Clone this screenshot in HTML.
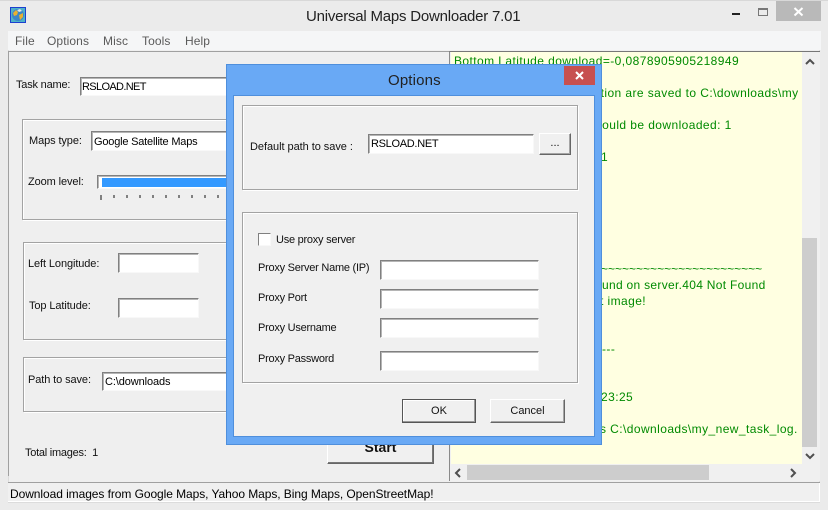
<!DOCTYPE html>
<html><head><meta charset="utf-8"><style>
html,body{margin:0;padding:0;width:828px;height:510px;overflow:hidden;background:#ebebeb}
body{position:relative;font-family:"Liberation Sans",sans-serif;font-size:11px;color:#111}
div,span.a{position:absolute;box-sizing:border-box}
.t{white-space:nowrap;line-height:14px;letter-spacing:-.1px}
.d{letter-spacing:-.25px}
.m{font-size:12px;color:#5a5a5a;letter-spacing:.1px}
.in{background:#fff;border:1px solid;border-color:#808080 #f8f8f8 #f8f8f8 #808080;box-shadow:inset 1px 1px 0 #b5b5b5}
.gr{border:1px solid #a3a3a3;box-shadow:1px 1px 0 #fff,inset 1px 1px 0 #fff}
.btn{background:#f0f0f0;border:1px solid;border-color:#fff #666 #666 #fff;box-shadow:inset -1px -1px 0 #a5a5a5,inset 1px 1px 0 #eee,0 0 0 1px #bbb;text-align:center;white-space:nowrap}
.lg{color:#008a00;font-size:12px;line-height:16px;white-space:nowrap;letter-spacing:.42px}
</style></head><body>
<div style="left:0;top:0;width:828px;height:1px;background:#d8d8d8"></div>
<svg style="position:absolute;left:10px;top:7px" width="16" height="16" viewBox="0 0 16 16"><rect x=".5" y=".5" width="15" height="15" fill="#4fb2c8" stroke="#1c3fd0"/><circle cx="8" cy="8" r="6" fill="#3a86c8"/><path d="M3 6l3-3 2 2-1 3-3 1zM9 8l4-2 0 4-3 3z" fill="#e8b030"/><path d="M7 3l3-1 2 2-3 1z" fill="#dfe8e8"/></svg>
<div class="t" style="left:306px;top:7px;font-size:15px;line-height:20px;color:#222;letter-spacing:-.22px">Universal Maps Downloader 7.01</div>
<div style="left:732px;top:13px;width:8px;height:2px;background:#222"></div>
<div style="left:758px;top:8px;width:10px;height:8px;border:1px solid #777;border-top-width:2px"></div>
<div style="left:776px;top:1px;width:45px;height:20px;background:#b9b9b9"></div>
<svg style="position:absolute;left:793px;top:6px" width="11" height="11" viewBox="0 0 11 11"><path d="M1.500 2l8 7.500M9.500 2l-8 7.500" stroke="#fff" stroke-width="2"/></svg>

<div style="left:8px;top:31px;width:812px;height:472px;background:#efefef;border:1px solid #dcdcdc"></div>
<div style="left:8px;top:31px;width:813px;height:19px;background:#f5f6f7"></div>
<div class="t m" style="left:15px;top:34px">File</div>
<div class="t m" style="left:47px;top:34px">Options</div>
<div class="t m" style="left:103px;top:34px">Misc</div>
<div class="t m" style="left:142px;top:34px">Tools</div>
<div class="t m" style="left:185px;top:34px">Help</div>
<div style="left:8px;top:51px;width:812px;height:1px;background:#a0a0a0"></div>
<div style="left:8px;top:51px;width:1px;height:425px;background:#a0a0a0"></div>

<div class="t" style="left:16px;top:78px;letter-spacing:-.2px">Task name:</div>
<div class="in" style="left:80px;top:77px;width:170px;height:19px"></div>
<div class="t" style="left:82px;top:80px;color:#000;letter-spacing:-.65px">RSLOAD.NET</div>

<div class="gr" style="left:22px;top:119px;width:220px;height:101px"></div>
<div class="t" style="left:29px;top:134px">Maps type:</div>
<div class="in" style="left:91px;top:131px;width:160px;height:20px"></div>
<div class="t" style="left:94px;top:135px;color:#000;letter-spacing:-.2px">Google Satellite Maps</div>
<div class="t" style="left:28px;top:175px">Zoom level:</div>
<div class="in" style="left:97px;top:175px;width:140px;height:14px"></div>
<div style="left:102px;top:178px;width:130px;height:9px;background:#3399ff"></div>
<svg style="position:absolute;left:98px;top:193px" width="130" height="8"><path d="M3 2v5M16 2v3M29 2v3M42 2v3M55 2v3M68 2v3M81 2v3M94 2v3M107 2v3M120 2v3" stroke="#111"/></svg>

<div class="gr" style="left:23px;top:242px;width:220px;height:98px"></div>
<div class="t" style="left:28px;top:257px">Left Longitude:</div>
<div class="in" style="left:118px;top:253px;width:81px;height:20px"></div>
<div class="t" style="left:29px;top:299px">Top Latitude:</div>
<div class="in" style="left:118px;top:298px;width:81px;height:20px"></div>

<div class="gr" style="left:23px;top:357px;width:220px;height:55px"></div>
<div class="t" style="left:28px;top:373px">Path to save:</div>
<div class="in" style="left:102px;top:372px;width:140px;height:19px"></div>
<div class="t" style="left:105px;top:375px;color:#000">C:\downloads</div>
<div class="t" style="left:25px;top:446px;letter-spacing:-.25px">Total images:&nbsp; 1</div>
<div class="btn" style="left:327px;top:432px;width:107px;height:32px;font-weight:bold;font-size:14px;line-height:29px;color:#111;box-shadow:inset -1px -1px 0 #777">Start</div>

<div style="left:449px;top:51px;width:371px;height:430px;background:#f0f0f0;border-left:1px solid #8a8a8a;border-top:1px solid #777"></div>
<div style="left:451px;top:52px;width:351px;height:412px;background:#ffffe1"></div>
<div style="left:451px;top:52px;width:347px;height:412px;overflow:hidden">
<div class="lg" style="left:3px;top:1px">Bottom Latitude download=-0,0878905905218949</div>
<div class="lg" style="left:106px;top:33px">Information are saved to C:\downloads\my_new_task</div>
<div class="lg" style="left:92px;top:65px">Images should be downloaded: 1</div>
<div class="lg" style="left:150px;top:97px">1</div>
<div class="lg" style="left:150px;top:209px;letter-spacing:0">~~~~~~~~~~~~~~~~~~~~~~~</div>
<div class="lg" style="left:151px;top:225px;letter-spacing:.3px">und on server.404 Not Found</div>
<div class="lg" style="left:149px;top:241px">t image!</div>
<div class="lg" style="left:151px;top:289px">---</div>
<div class="lg" style="left:150px;top:337px">23:25</div>
<div class="lg" style="left:149px;top:369px">s C:\downloads\my_new_task_log.</div>
</div>
<div style="left:802px;top:238px;width:15px;height:209px;background:#cdcdcd"></div>
<div style="left:467px;top:465px;width:242px;height:15px;background:#cdcdcd"></div>
<svg style="position:absolute;left:804px;top:57px" width="12" height="10"><path d="M2 7l4-4 4 4" fill="none" stroke="#505050" stroke-width="2"/></svg>
<svg style="position:absolute;left:804px;top:451px" width="12" height="10"><path d="M2 3l4 4 4-4" fill="none" stroke="#505050" stroke-width="2"/></svg>
<svg style="position:absolute;left:453px;top:467px" width="10" height="12"><path d="M7 2l-4 4 4 4" fill="none" stroke="#505050" stroke-width="2"/></svg>
<svg style="position:absolute;left:788px;top:467px" width="10" height="12"><path d="M3 2l4 4-4 4" fill="none" stroke="#505050" stroke-width="2"/></svg>

<div style="left:8px;top:482px;width:812px;height:1px;background:#a0a0a0"></div>
<div style="left:8px;top:483px;width:812px;height:19px;background:#f0f0f0;border-bottom:1px solid #fff;border-right:1px solid #fff"></div>
<div class="t" style="left:10px;top:487px;font-size:12px;color:#000;letter-spacing:-.07px">Download images from Google Maps, Yahoo Maps, Bing Maps, OpenStreetMap!</div>

<div style="left:226px;top:64px;width:376px;height:381px;background:#69a9f5;border:1px solid #4f8fdc"></div>
<div style="left:233px;top:95px;width:362px;height:342px;background:#f0f0f0;border:1px solid #4f8fdc"></div>
<div class="t" style="left:388px;top:71px;font-size:15px;line-height:20px;color:#222;letter-spacing:.15px">Options</div>
<div style="left:564px;top:66px;width:31px;height:19px;background:#c75050"></div>
<svg style="position:absolute;left:574px;top:70px" width="11" height="11" viewBox="0 0 11 11"><path d="M2 2l7 7M9 2l-7 7" stroke="#fff" stroke-width="2"/></svg>

<div class="gr" style="left:242px;top:105px;width:336px;height:85px"></div>
<div class="t" style="left:250px;top:140px;letter-spacing:-.05px">Default path to save :</div>
<div class="in" style="left:368px;top:134px;width:166px;height:20px"></div>
<div class="t" style="left:371px;top:137px;color:#000;letter-spacing:-.3px">RSLOAD.NET</div>
<div class="btn" style="left:539px;top:133px;width:32px;height:22px;line-height:18px;box-shadow:inset -1px -1px 0 #a5a5a5">...</div>

<div class="gr" style="left:242px;top:212px;width:336px;height:171px"></div>
<div class="in" style="left:258px;top:233px;width:13px;height:13px;box-shadow:none"></div>
<div class="t d" style="left:276px;top:233px">Use proxy server</div>
<div class="t d" style="left:258px;top:261px">Proxy Server Name (IP)</div>
<div class="in" style="left:380px;top:260px;width:159px;height:20px"></div>
<div class="t d" style="left:258px;top:291px">Proxy Port</div>
<div class="in" style="left:380px;top:289px;width:159px;height:20px"></div>
<div class="t d" style="left:258px;top:321px">Proxy Username</div>
<div class="in" style="left:380px;top:318px;width:159px;height:20px"></div>
<div class="t d" style="left:258px;top:352px">Proxy Password</div>
<div class="in" style="left:380px;top:351px;width:159px;height:20px"></div>

<div class="btn" style="left:402px;top:399px;width:74px;height:24px;line-height:23px;border:1px solid #555;box-shadow:inset -1px -1px 0 #999,inset 1px 1px 0 #fff">OK</div>
<div class="btn" style="left:490px;top:399px;width:75px;height:24px;line-height:23px;box-shadow:inset -1px -1px 0 #a5a5a5">Cancel</div>
</body></html>
